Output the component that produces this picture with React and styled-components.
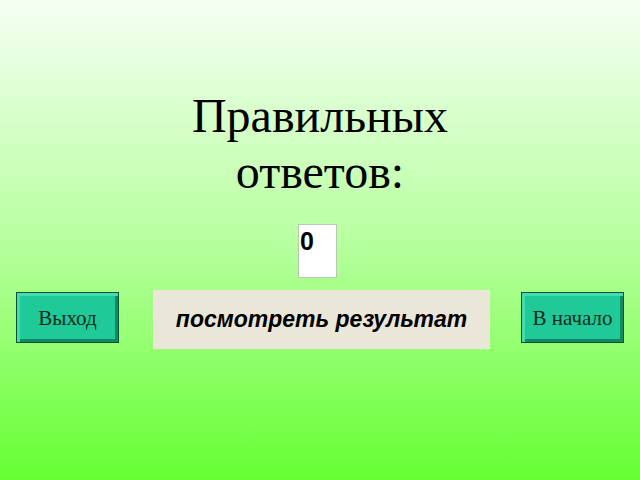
import React from 'react';
import styled, { createGlobalStyle } from 'styled-components';

const Global = createGlobalStyle`
  html, body { margin: 0; padding: 0; }
  body { width: 640px; height: 480px; overflow: hidden; }
`;

const Slide = styled.div`
  width: 640px;
  height: 480px;
  box-sizing: border-box;
  background: linear-gradient(to bottom, #f6fff4 0%, #b8ffa0 50%, #66ff33 100%);
  display: flex;
  flex-direction: column;
  align-items: center;
  padding-top: 88px;
`;

const Title = styled.h1`
  margin: 0;
  font-family: "Liberation Serif", "Times New Roman", serif;
  font-weight: normal;
  font-size: 48px;
  line-height: 56px;
  color: #000;
  text-align: center;
`;

const Score = styled.div`
  margin-top: 24px;
  margin-left: -5px;
  width: 39px;
  height: 54px;
  box-sizing: border-box;
  background: #fff;
  border: 1px solid #b8c8b0;
  font-family: "Liberation Sans", Arial, sans-serif;
  font-weight: bold;
  font-size: 25px;
  line-height: 32px;
  padding-left: 1px;
  color: #000;
`;

const Row = styled.div`
  width: 640px;
  margin-top: 7px;
  display: flex;
  align-items: center;
  justify-content: space-between;
  padding: 0 16px;
  box-sizing: border-box;
`;

const NavButton = styled.div`
  width: 103px;
  height: 51px;
  box-sizing: border-box;
  background: #20ca98;
  border: 1px solid #0b4f36;
  box-shadow:
    inset 3px 3px 0 #44dcae,
    inset -3px -3px 0 #138a63;
  display: flex;
  align-items: center;
  justify-content: center;
  font-family: "Liberation Serif", "Times New Roman", serif;
  font-size: 21px;
  color: #0a2a1c;
  padding-top: 2px;
`;

const ResultBox = styled.div`
  width: 337px;
  height: 59px;
  margin-top: 5px;
  margin-left: 3px;
  background: #ebe7d8;
  display: flex;
  align-items: center;
  justify-content: center;
  font-family: "Liberation Sans", Arial, sans-serif;
  font-weight: bold;
  font-style: italic;
  font-size: 23px;
  color: #000;
`;

export default function App() {
  return (
    <>
      <Global />
      <Slide>
        <Title>
          Правильных
          <br />
          ответов:
        </Title>
        <Score>0</Score>
        <Row>
          <NavButton>Выход</NavButton>
          <ResultBox>посмотреть результат</ResultBox>
          <NavButton>В начало</NavButton>
        </Row>
      </Slide>
    </>
  );
}
